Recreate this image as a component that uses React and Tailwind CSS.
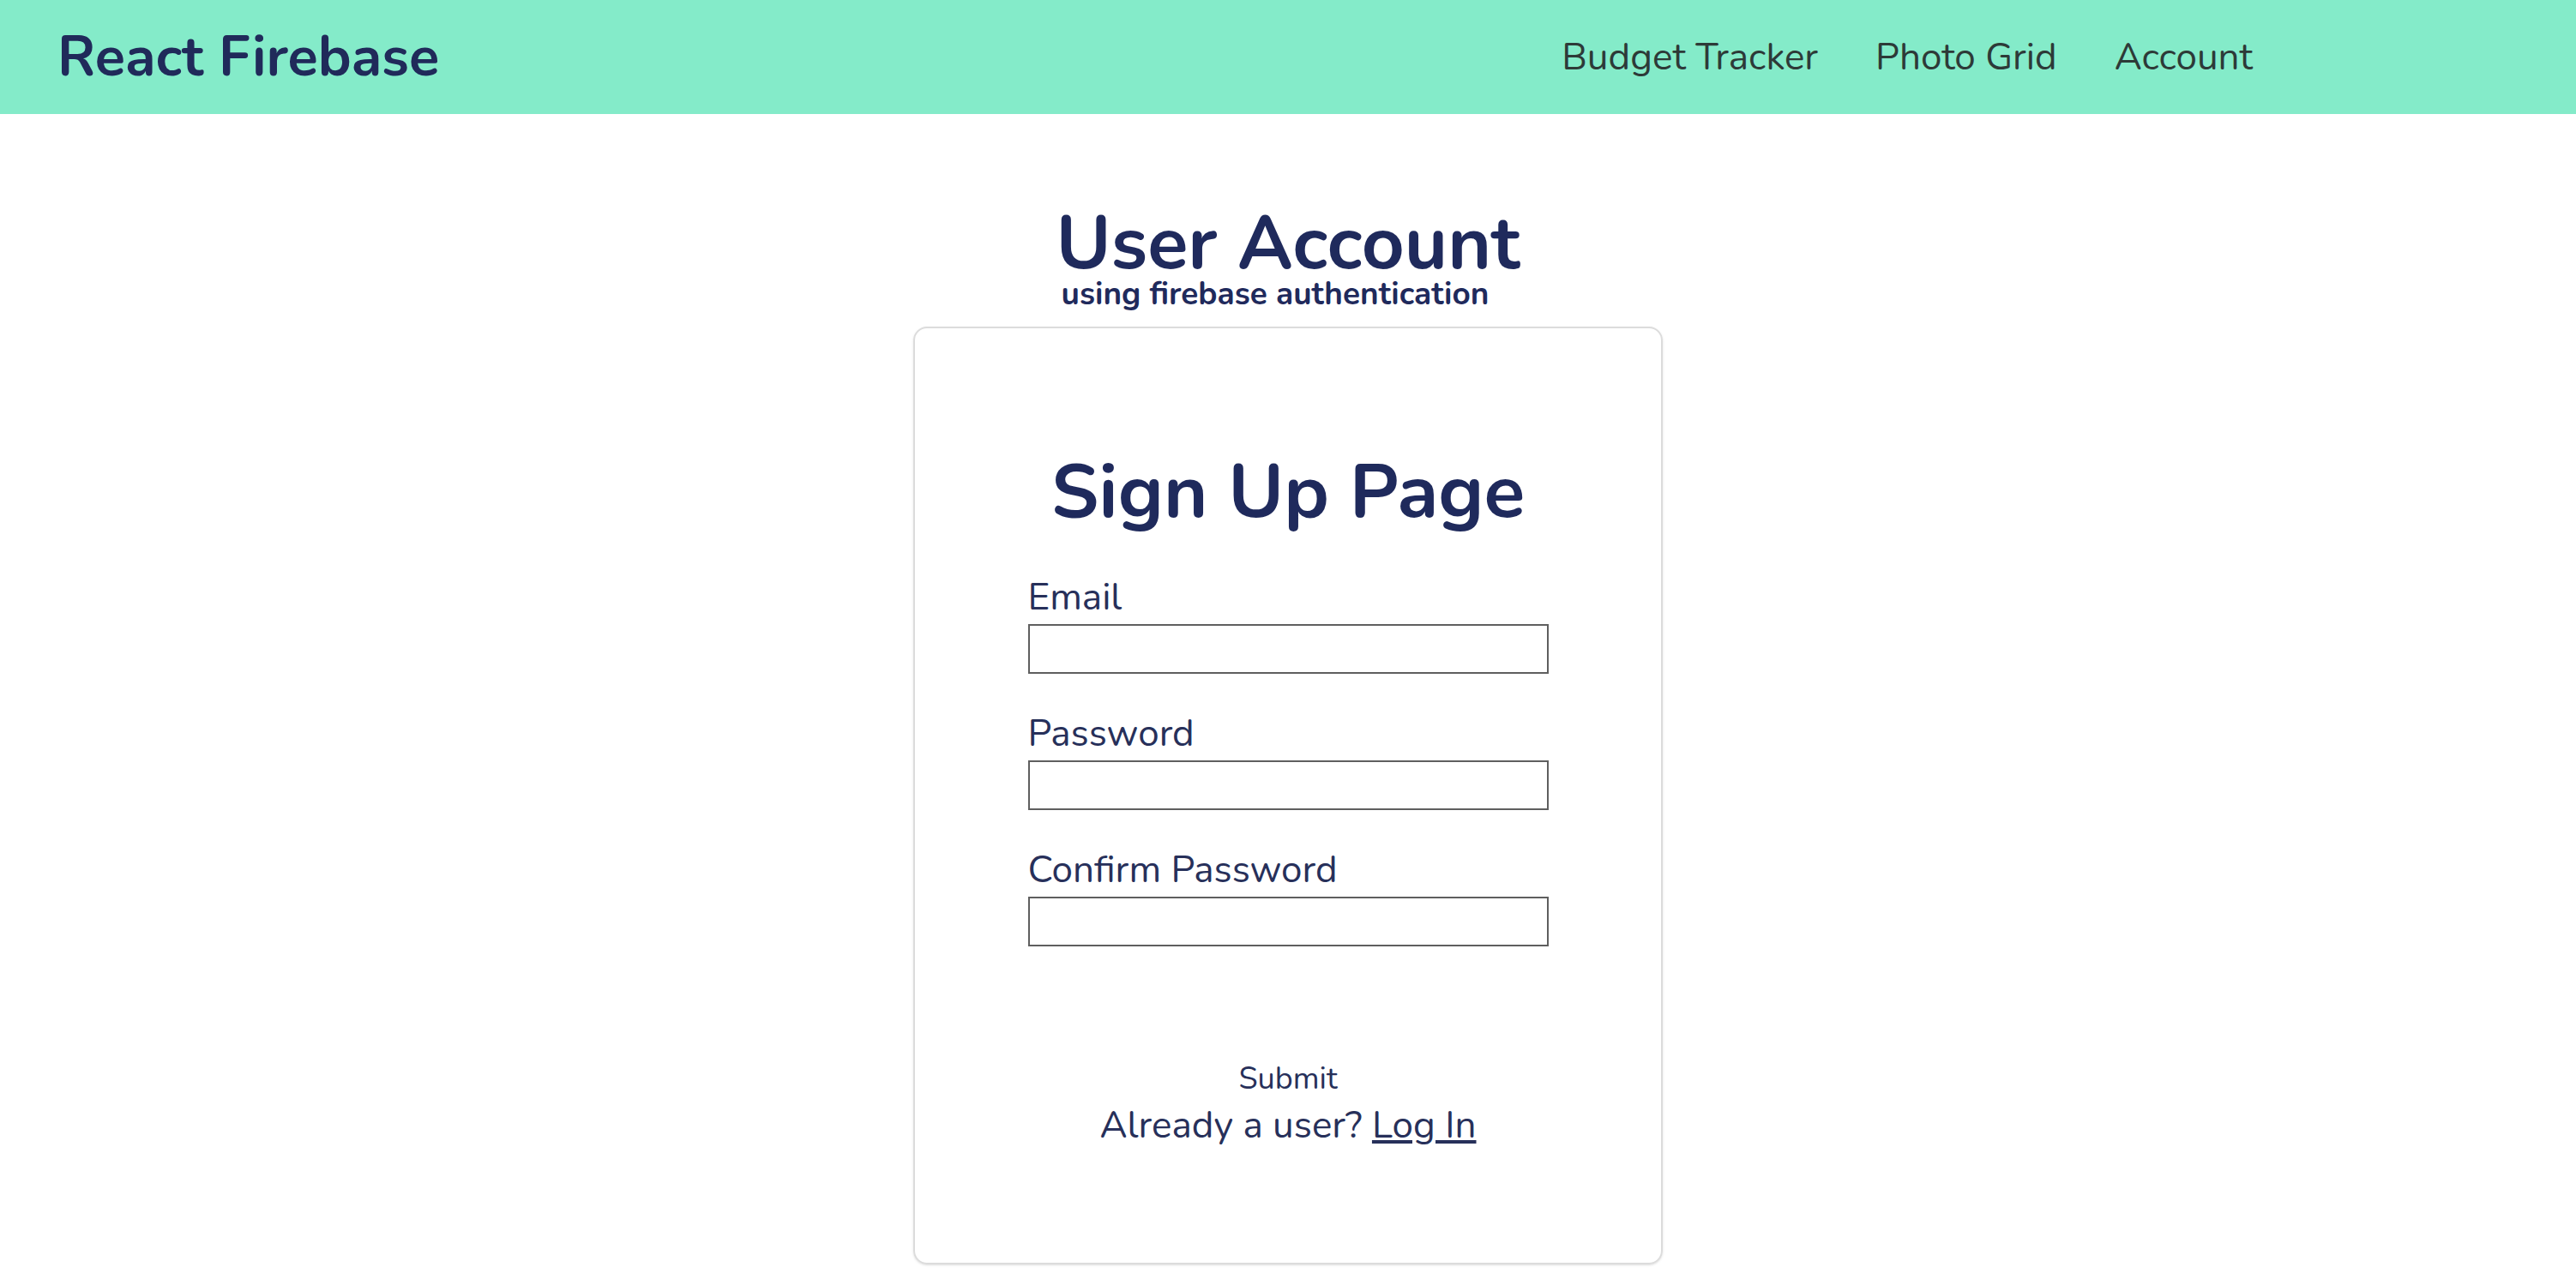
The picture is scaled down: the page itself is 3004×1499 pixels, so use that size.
import React from 'react';

const font = { fontFamily: '"Nunito", "Lato", "Open Sans", sans-serif' };

function Field({ label, type = 'text', top }) {
  return (
    <div className={`flex flex-col ${top}`}>
      <label className="text-[44px] leading-none text-[#27305a]">{label}</label>
      <input
        type={type}
        className="mt-[9px] h-[58px] w-[607px] border-2 border-[#5f5f5f] bg-white outline-none"
      />
    </div>
  );
}

export default function App() {
  return (
    <div className="min-h-screen bg-white" style={font}>
      {/* Header */}
      <header className="flex h-[133px] items-center justify-between bg-[#84ebc9] pl-[67px] pr-[377px]">
        <h1 className="text-[65px] font-bold leading-none text-[#202a5a]">React Firebase</h1>
        <nav className="flex items-center gap-[67px] text-[44px] leading-none text-[#2d3a38]">
          <a href="#">Budget Tracker</a>
          <a href="#">Photo Grid</a>
          <a href="#">Account</a>
        </nav>
      </header>

      {/* Content */}
      <main className="flex flex-col items-center">
        <h2 className="mt-[108px] text-[87px] font-bold leading-none text-[#1f2a5c]">User Account</h2>
        <p className="pr-[30px] text-[37px] font-bold leading-[30px] text-[#1f2a5c]">
          using firebase authentication
        </p>

        <div className="mt-[23px] flex h-[1094px] w-[874px] flex-col items-center rounded-[16px] border-2 border-[#dcdcdc] shadow-sm">
          <h3 className="mt-[147px] text-[88px] font-bold leading-none text-[#1f2a5c]">Sign Up Page</h3>
          <form className="mt-[57px] flex flex-col items-center">
            <Field label="Email" />
            <Field label="Password" type="password" top="mt-[48px]" />
            <Field label="Confirm Password" type="password" top="mt-[48px]" />
            <button type="button" className="mt-[137px] text-[36px] leading-none text-[#27305a]">
              Submit
            </button>
            <p className="mt-[14px] text-[44px] leading-none text-[#27305a]">
              Already a user? <a href="#" className="underline">Log In</a>
            </p>
          </form>
        </div>
      </main>
    </div>
  );
}
